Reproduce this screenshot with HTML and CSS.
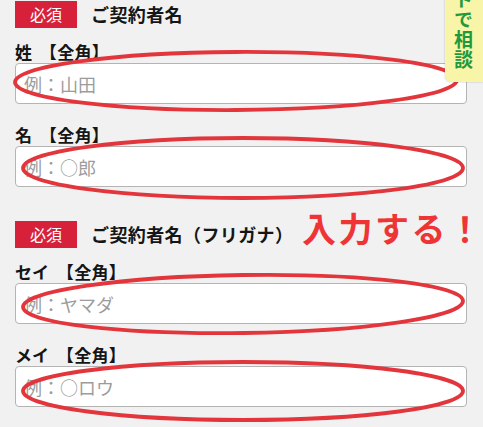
FILE: index.html
```html
<!DOCTYPE html>
<html lang="ja">
<head>
<meta charset="utf-8">
<title>ご契約者名</title>
<link rel="stylesheet" href="styles.css">
</head>
<body>
<main class="page">
  <section class="group">
    <div class="group-head">
      <span class="badge">必須</span>
      <h2 class="group-title">ご契約者名</h2>
    </div>
    <div class="field">
      <label class="field-label" for="sei">姓 <span class="note">【全角】</span></label>
      <input class="field-input" id="sei" type="text" placeholder="例：山田">
    </div>
    <div class="field">
      <label class="field-label" for="mei">名 <span class="note">【全角】</span></label>
      <input class="field-input" id="mei" type="text" placeholder="例：○郎">
    </div>
  </section>

  <section class="group group-kana">
    <div class="group-head">
      <span class="badge">必須</span>
      <h2 class="group-title">ご契約者名（フリガナ）</h2>
    </div>
    <p class="annotation"><span class="annotation-word">入力する</span>！</p>
    <div class="field">
      <label class="field-label" for="sei-kana">セイ <span class="note">【全角】</span></label>
      <input class="field-input" id="sei-kana" type="text" placeholder="例：ヤマダ">
    </div>
    <div class="field">
      <label class="field-label" for="mei-kana">メイ <span class="note">【全角】</span></label>
      <input class="field-input" id="mei-kana" type="text" placeholder="例：○ロウ">
    </div>
  </section>

  <svg class="marks" width="483" height="427" viewBox="0 0 483 427" aria-hidden="true">
    <ellipse cx="236" cy="81" rx="221" ry="29" transform="rotate(-0.3 236 81)"/>
    <ellipse cx="243" cy="168" rx="220" ry="30"/>
    <ellipse cx="243" cy="304" rx="220" ry="29" transform="rotate(-0.8 243 304)"/>
    <ellipse cx="243" cy="391" rx="220" ry="29"/>
  </svg>

  <aside class="chat-tab"><span class="chat-tab-text">トで相談</span></aside>
</main>
</body>
</html>
```

FILE: styles.css
```css
* { box-sizing: border-box; }

html, body {
  margin: 0;
  padding: 0;
  background: #f1f1f1;
}

body {
  font-family: "Noto Sans CJK JP", "Noto Sans", sans-serif;
  color: #1a1a1a;
  width: 483px;
  height: 427px;
  overflow: hidden;
}

.page {
  position: relative;
  width: 483px;
  height: 427px;
  padding: 1px 16px 0 15px;
}

.group {
  display: flex;
  flex-direction: column;
}

.group-kana {
  position: relative;
  margin-top: 13px;
}

.group-head {
  display: flex;
  align-items: center;
  height: 27px;
  margin-bottom: 14px;
}

.badge {
  display: inline-block;
  height: 27px;
  line-height: 27px;
  padding: 0 15px;
  background: #d7213a;
  color: #fff;
  font-size: 16px;
  font-weight: 400;
}

.group-title {
  margin: 0 0 0 14px;
  font-size: 18px;
  font-weight: 700;
  line-height: 27px;
  letter-spacing: 0.4px;
  color: #151515;
}

.field {
  display: flex;
  flex-direction: column;
  gap: 1px;
  margin-bottom: 21px;
}

.field-label {
  font-size: 17px;
  font-weight: 700;
  line-height: 20px;
  color: #151515;
}

.note {
  margin-left: 4px;
  letter-spacing: 0.3px;
}

.field-input {
  display: block;
  width: 452px;
  height: 41px;
  margin: 0;
  padding: 0 8px;
  border: 1px solid #b4b4b4;
  border-radius: 4px;
  background: #fff;
  font-family: "Noto Sans CJK JP", "Noto Sans", sans-serif;
  font-size: 18px;
  color: #333;
  outline: none;
}

.field-input::placeholder {
  color: #9c9c9c;
}

.annotation {
  position: absolute;
  left: 287px;
  top: -10px;
  margin: 0;
  font-size: 34px;
  font-weight: 700;
  line-height: 34px;
  color: #ee3434;
  white-space: nowrap;
}

.annotation-word {
  letter-spacing: 2.5px;
}

.marks {
  position: absolute;
  left: 0;
  top: 0;
  pointer-events: none;
}

.marks ellipse {
  fill: none;
  stroke: #e2363c;
  stroke-width: 3.8;
}

.chat-tab {
  position: absolute;
  top: 0;
  right: 0;
  width: 38px;
  height: 82px;
  overflow: hidden;
  background: #f8f4a8;
  border-radius: 0 0 0 6px;
  box-shadow: 0 0 2px rgba(0, 0, 0, 0.25);
}

.chat-tab-text {
  display: block;
  writing-mode: vertical-rl;
  margin: -10px 0 0 0;
  width: 38px;
  line-height: 40px;
  font-size: 19px;
  font-weight: 700;
  letter-spacing: 1px;
  color: #1e9a3c;
}
```
